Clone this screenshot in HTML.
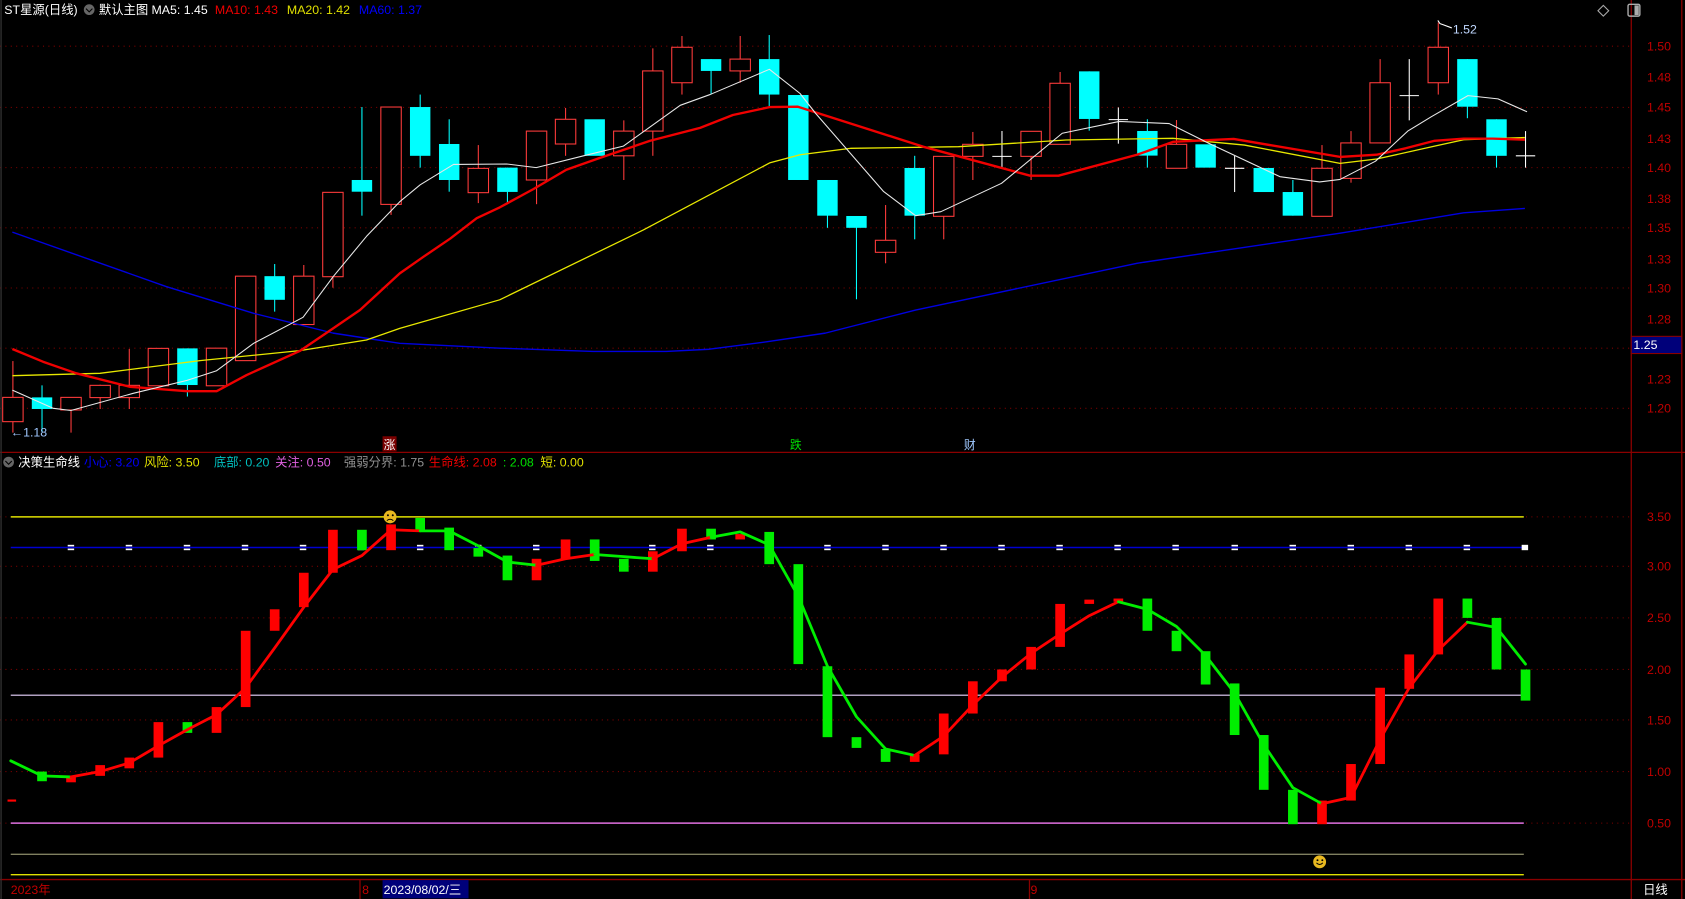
<!DOCTYPE html>
<html><head><meta charset="utf-8"><style>
html,body{margin:0;padding:0;background:#000;overflow:hidden}
svg{display:block}
text{font-family:"Liberation Sans","Noto Sans CJK SC",sans-serif}
</style></head><body>
<svg width="1685" height="899" viewBox="0 0 1568 836.6" preserveAspectRatio="none" xmlns="http://www.w3.org/2000/svg">
<rect width="1568" height="837" fill="#000"/>
<g stroke="#7a0000" stroke-width="1" stroke-dasharray="1,4">
<line x1="0" y1="43" x2="1518" y2="43"/><line x1="0" y1="100" x2="1518" y2="100"/><line x1="0" y1="156" x2="1518" y2="156"/><line x1="0" y1="212" x2="1518" y2="212"/><line x1="0" y1="268" x2="1518" y2="268"/><line x1="0" y1="324" x2="1518" y2="324"/><line x1="0" y1="380" x2="1518" y2="380"/>
<line x1="0" y1="481" x2="1518" y2="481"/><line x1="0" y1="527" x2="1518" y2="527"/><line x1="0" y1="575" x2="1518" y2="575"/><line x1="0" y1="623" x2="1518" y2="623"/><line x1="0" y1="670" x2="1518" y2="670"/><line x1="0" y1="718" x2="1518" y2="718"/><line x1="0" y1="766" x2="1518" y2="766"/>
</g>
<g stroke="#8b0000" stroke-width="1.2" fill="none">
<line x1="0" y1="421" x2="1568" y2="421"/>
<line x1="1518" y1="0" x2="1518" y2="837"/>
<line x1="0" y1="818.5" x2="1568" y2="818.5"/>
<line x1="1565" y1="0" x2="1565" y2="837"/>
<line x1="335" y1="819" x2="335" y2="837"/><line x1="958" y1="819" x2="958" y2="837"/>
<line x1="1" y1="0" x2="1" y2="837" stroke="#333"/>
</g>
<g fill="#c00000" font-size="11.5" text-anchor="end">
<text x="1555" y="47">1.50</text><text x="1555" y="76">1.48</text><text x="1555" y="104">1.45</text><text x="1555" y="133">1.43</text><text x="1555" y="160">1.40</text><text x="1555" y="189">1.38</text><text x="1555" y="216">1.35</text><text x="1555" y="245">1.33</text><text x="1555" y="272">1.30</text><text x="1555" y="301">1.28</text><text x="1555" y="357">1.23</text><text x="1555" y="384">1.20</text>
<text x="1555" y="485">3.50</text><text x="1555" y="531">3.00</text><text x="1555" y="579">2.50</text><text x="1555" y="627">2.00</text><text x="1555" y="674">1.50</text><text x="1555" y="722">1.00</text><text x="1555" y="770">0.50</text>
</g>
<rect x="1518" y="313" width="47" height="16" fill="#00007a" stroke="#8b0000"/>
<text x="1520" y="325" fill="#fff" font-size="11.5">1.25</text>

<!-- candles: wicks -->
<g stroke-width="1">
<g stroke="#ff3b3b">
<line x1="12" y1="336" x2="12" y2="402.6"/><line x1="66.1" y1="370" x2="66.1" y2="402.6"/><line x1="93.2" y1="358" x2="93.2" y2="380.6"/><line x1="120.3" y1="324.8" x2="120.3" y2="380.6"/><line x1="282.7" y1="246.6" x2="282.7" y2="302"/><line x1="309.8" y1="179" x2="309.8" y2="267.7"/><line x1="363.9" y1="99.6" x2="363.9" y2="200"/><line x1="445.1" y1="135" x2="445.1" y2="189"/><line x1="499.3" y1="122" x2="499.3" y2="190"/><line x1="526.3" y1="100.5" x2="526.3" y2="145"/><line x1="580.5" y1="112" x2="580.5" y2="167.5"/><line x1="607.5" y1="45" x2="607.5" y2="145"/><line x1="634.6" y1="33.5" x2="634.6" y2="88"/><line x1="688.8" y1="33.5" x2="688.8" y2="77"/><line x1="824.1" y1="190.8" x2="824.1" y2="245"/><line x1="878.2" y1="145.5" x2="878.2" y2="222.7"/><line x1="905.3" y1="122.8" x2="905.3" y2="167.5"/><line x1="959.5" y1="122" x2="959.5" y2="167.5"/><line x1="986.5" y1="67" x2="986.5" y2="134.3"/><line x1="1094.8" y1="111.7" x2="1094.8" y2="156.6"/><line x1="1230.2" y1="135" x2="1230.2" y2="201.3"/><line x1="1257.2" y1="122" x2="1257.2" y2="170"/><line x1="1284.3" y1="55" x2="1284.3" y2="133"/><line x1="1338.4" y1="21" x2="1338.4" y2="88"/>
</g>
<g stroke="#00ffff">
<line x1="39.1" y1="358.6" x2="39.1" y2="402"/><line x1="174.4" y1="324.2" x2="174.4" y2="369"/><line x1="255.6" y1="245.7" x2="255.6" y2="290"/><line x1="336.8" y1="99.6" x2="336.8" y2="200.7"/><line x1="391" y1="88" x2="391" y2="156"/><line x1="418" y1="111" x2="418" y2="178.4"/><line x1="472.2" y1="156" x2="472.2" y2="189"/><line x1="661.7" y1="55" x2="661.7" y2="88"/><line x1="715.8" y1="32.6" x2="715.8" y2="99.6"/><line x1="770" y1="167.5" x2="770" y2="212"/><line x1="797" y1="201" x2="797" y2="278.5"/><line x1="851.2" y1="145" x2="851.2" y2="222.7"/><line x1="1013.6" y1="66.4" x2="1013.6" y2="121.6"/><line x1="1067.7" y1="111" x2="1067.7" y2="156"/><line x1="1203.1" y1="167.5" x2="1203.1" y2="200.7"/><line x1="1365.5" y1="55" x2="1365.5" y2="110"/><line x1="1392.6" y1="111" x2="1392.6" y2="156"/>
</g>
<g stroke="#fff">
<line x1="932.4" y1="121.9" x2="932.4" y2="156.3"/><line x1="923.4" y1="145.5" x2="941.4" y2="145.5"/>
<line x1="1040.7" y1="100" x2="1040.7" y2="133.7"/><line x1="1031.7" y1="111.3" x2="1049.7" y2="111.3"/>
<line x1="1148.9" y1="145" x2="1148.9" y2="178.7"/><line x1="1139.9" y1="156.6" x2="1157.9" y2="156.6"/>
<line x1="1311.4" y1="55" x2="1311.4" y2="112"/><line x1="1302.4" y1="89" x2="1320.4" y2="89"/>
<line x1="1419.6" y1="122" x2="1419.6" y2="156"/><line x1="1410.6" y1="145" x2="1428.6" y2="145"/>
</g>
<g stroke="#ff3b3b" fill="#000">
<rect x="2.5" y="369.8" width="19" height="22.6"/><rect x="56.6" y="369.8" width="19" height="11.7"/><rect x="83.7" y="358.6" width="19" height="11.4"/><rect x="110.8" y="358.6" width="19" height="11.4"/><rect x="137.9" y="324.2" width="19" height="34.8"/><rect x="192" y="324" width="19" height="35"/><rect x="219.1" y="257" width="19" height="78.6"/><rect x="273.2" y="257" width="19" height="45"/><rect x="300.3" y="179" width="19" height="78.5"/><rect x="354.4" y="99.6" width="19" height="90.6"/><rect x="435.6" y="156.7" width="19" height="22.6"/><rect x="489.8" y="122" width="19" height="45.5"/><rect x="516.8" y="111" width="19" height="23"/><rect x="571" y="122" width="19" height="23"/><rect x="598" y="66" width="19" height="56"/><rect x="625.1" y="44" width="19" height="33"/><rect x="679.3" y="55" width="19" height="11"/><rect x="814.6" y="223.6" width="19" height="11.2"/><rect x="868.7" y="145.5" width="19" height="55.8"/><rect x="895.8" y="134.3" width="19" height="11.2"/><rect x="950" y="122.2" width="19" height="23.3"/><rect x="977" y="77.5" width="19" height="56.8"/><rect x="1085.3" y="134.3" width="19" height="22.3"/><rect x="1220.7" y="156.6" width="19" height="44.7"/><rect x="1247.7" y="133" width="19" height="33"/><rect x="1274.8" y="77" width="19" height="56"/><rect x="1328.9" y="44" width="19" height="33"/>
</g>
<g fill="#00ffff">
<rect x="29.6" y="369.8" width="19" height="10.8"/><rect x="164.9" y="324.2" width="19" height="34.1"/><rect x="246.1" y="257" width="19" height="22"/><rect x="327.3" y="167.5" width="19" height="10.9"/><rect x="381.5" y="99.6" width="19" height="45.4"/><rect x="408.5" y="134" width="19" height="33.5"/><rect x="462.7" y="156" width="19" height="22.6"/><rect x="543.9" y="111" width="19" height="34"/><rect x="652.2" y="55" width="19" height="11"/><rect x="706.3" y="55" width="19" height="33"/><rect x="733.4" y="88.4" width="19" height="79.1"/><rect x="760.5" y="167.5" width="19" height="33.2"/><rect x="787.5" y="201" width="19" height="11"/><rect x="841.7" y="156.3" width="19" height="44.4"/><rect x="1004.1" y="66.4" width="19" height="44.3"/><rect x="1058.2" y="121.9" width="19" height="22.9"/><rect x="1112.4" y="134.3" width="19" height="21.7"/><rect x="1166.5" y="156.3" width="19" height="22.4"/><rect x="1193.6" y="178.7" width="19" height="22"/><rect x="1356" y="55" width="19" height="44.3"/><rect x="1383.1" y="111" width="19" height="34"/>
</g>
</g>

<!-- MAs -->
<g fill="none" stroke-linejoin="round">
<polyline stroke="#0000e0" stroke-width="1.3" points="11.5,216 155,266.8 236,291.6 310,310 372,319.5 465,324 552,327 620,327 660,325 714,318 768,310 852,288.5 1058,245 1247,217 1308,207 1362,198 1419,194"/>
<polyline stroke="#e8e800" stroke-width="1.2" points="11.5,349.6 93,347.4 186,335.6 279,326.3 341,316.4 372,305.6 465,279 598.7,214 716.6,151.4 744.5,144 792,138 892,136.5 992,130.3 1091.5,128.7 1158,135 1247,152 1281,148 1335,136 1362,130 1419,128"/>
<polyline stroke="#f00000" stroke-width="2.2" points="11.5,324.8 40,336.6 71,347.4 121,360 174,364 201.6,364 229.5,349 279,326.6 310,305.6 335,288.5 372,254.4 394,239 419,222 443.6,203 465,193 496.3,176 527,158 558,147 605,131 651.5,119 682,107 716.6,99.6 742.5,99.3 859,136.5 958.6,163.5 985,163.5 1058,144 1091.5,132 1148,129.3 1247,146 1281,144 1308,138 1335,131 1362,129 1389,129 1419,130"/>
<polyline stroke="#e8e8e8" stroke-width="1" points="11.5,363 49.6,380 66,382 124,366 174,354 201.6,345 236,319.5 282,295.3 310,257.5 341,220 372,187.7 391,172 422,153 471.5,152.6 499,156 543,145 580,136 633,98 660.7,88 716,64.5 744.5,87 759,105.5 822,178 852,200.7 875.5,197 932,170.6 988.5,124 1041.6,113 1088,115 1125,133.4 1191,164.4 1228,169.3 1247,167 1280,150 1310,122 1332,108.6 1366,89 1394,92 1421,104"/>
</g>

<!-- lower lines -->
<g stroke-width="1.3">
<line x1="10" y1="481" x2="1418" y2="481" stroke="#e0e000"/>
<line x1="10" y1="509.5" x2="1422" y2="509.5" stroke="#0000d0"/>
<line x1="10" y1="647" x2="1418" y2="647" stroke="#b0a0c0"/>
<line x1="10" y1="766" x2="1418" y2="766" stroke="#e070e0"/>
<line x1="10" y1="795" x2="1418" y2="795" stroke="#808060"/>
<line x1="10" y1="814" x2="1418" y2="814" stroke="#e0e000"/>
</g>
<g fill="#fff">
<rect x="63" y="507" width="6" height="1.5"/><rect x="63" y="510.5" width="6" height="1.5"/>
<rect x="117" y="507" width="6" height="1.5"/><rect x="117" y="510.5" width="6" height="1.5"/>
<rect x="171" y="507" width="6" height="1.5"/><rect x="171" y="510.5" width="6" height="1.5"/>
<rect x="225" y="507" width="6" height="1.5"/><rect x="225" y="510.5" width="6" height="1.5"/>
<rect x="279" y="507" width="6" height="1.5"/><rect x="279" y="510.5" width="6" height="1.5"/>
<rect x="333" y="507" width="6" height="1.5"/><rect x="333" y="510.5" width="6" height="1.5"/>
<rect x="388" y="507" width="6" height="1.5"/><rect x="388" y="510.5" width="6" height="1.5"/>
<rect x="442" y="507" width="6" height="1.5"/><rect x="442" y="510.5" width="6" height="1.5"/>
<rect x="496" y="507" width="6" height="1.5"/><rect x="496" y="510.5" width="6" height="1.5"/>
<rect x="550" y="507" width="6" height="1.5"/><rect x="550" y="510.5" width="6" height="1.5"/>
<rect x="604" y="507" width="6" height="1.5"/><rect x="604" y="510.5" width="6" height="1.5"/>
<rect x="658" y="507" width="6" height="1.5"/><rect x="658" y="510.5" width="6" height="1.5"/>
<rect x="712" y="507" width="6" height="1.5"/><rect x="712" y="510.5" width="6" height="1.5"/>
<rect x="767" y="507" width="6" height="1.5"/><rect x="767" y="510.5" width="6" height="1.5"/>
<rect x="821" y="507" width="6" height="1.5"/><rect x="821" y="510.5" width="6" height="1.5"/>
<rect x="875" y="507" width="6" height="1.5"/><rect x="875" y="510.5" width="6" height="1.5"/>
<rect x="929" y="507" width="6" height="1.5"/><rect x="929" y="510.5" width="6" height="1.5"/>
<rect x="983" y="507" width="6" height="1.5"/><rect x="983" y="510.5" width="6" height="1.5"/>
<rect x="1037" y="507" width="6" height="1.5"/><rect x="1037" y="510.5" width="6" height="1.5"/>
<rect x="1091" y="507" width="6" height="1.5"/><rect x="1091" y="510.5" width="6" height="1.5"/>
<rect x="1146" y="507" width="6" height="1.5"/><rect x="1146" y="510.5" width="6" height="1.5"/>
<rect x="1200" y="507" width="6" height="1.5"/><rect x="1200" y="510.5" width="6" height="1.5"/>
<rect x="1254" y="507" width="6" height="1.5"/><rect x="1254" y="510.5" width="6" height="1.5"/>
<rect x="1308" y="507" width="6" height="1.5"/><rect x="1308" y="510.5" width="6" height="1.5"/>
<rect x="1362" y="507" width="6" height="1.5"/><rect x="1362" y="510.5" width="6" height="1.5"/>
<rect x="1416" y="507" width="6" height="5"/>
</g>

<!-- lower bars -->
<rect x="7" y="744" width="8" height="2" fill="#f00"/>
<g fill="#ff0000">
<rect x="61.6" y="722" width="9" height="6"/><rect x="88.7" y="712" width="9" height="10"/><rect x="115.8" y="705" width="9" height="10"/><rect x="142.9" y="672" width="9" height="33"/><rect x="197" y="658" width="9" height="24"/><rect x="224.1" y="587" width="9" height="71"/><rect x="251.1" y="567" width="9" height="20"/><rect x="278.2" y="533" width="9" height="32"/><rect x="305.3" y="493" width="9" height="40"/><rect x="359.4" y="488" width="9" height="24"/><rect x="494.8" y="520" width="9" height="20"/><rect x="521.8" y="502" width="9" height="18"/><rect x="603" y="513" width="9" height="19"/><rect x="630.1" y="492" width="9" height="21"/><rect x="684.3" y="497" width="9" height="5"/><rect x="846.7" y="702" width="9" height="7"/><rect x="873.7" y="664" width="9" height="38"/><rect x="900.8" y="634" width="9" height="30"/><rect x="927.9" y="623" width="9" height="11"/><rect x="955" y="602" width="9" height="21"/><rect x="982" y="562" width="9" height="40"/><rect x="1009.1" y="558" width="9" height="4"/><rect x="1036.2" y="557" width="9" height="3"/><rect x="1225.7" y="745" width="9" height="22"/><rect x="1252.7" y="711" width="9" height="34"/><rect x="1279.8" y="640" width="9" height="71"/><rect x="1306.9" y="609" width="9" height="32"/><rect x="1333.9" y="557" width="9" height="52"/>
</g>
<g fill="#00ee00">
<rect x="34.6" y="718" width="9" height="9"/><rect x="169.9" y="672" width="9" height="10"/><rect x="332.3" y="493" width="9" height="19"/><rect x="386.5" y="482" width="9" height="11"/><rect x="413.5" y="491" width="9" height="21"/><rect x="440.6" y="510" width="9" height="8"/><rect x="467.7" y="517" width="9" height="23"/><rect x="548.9" y="502" width="9" height="20"/><rect x="576" y="520" width="9" height="12"/><rect x="657.2" y="492" width="9" height="10"/><rect x="711.3" y="495" width="9" height="30"/><rect x="738.4" y="525" width="9" height="93"/><rect x="765.5" y="620" width="9" height="66"/><rect x="792.5" y="686" width="9" height="10"/><rect x="819.6" y="697" width="9" height="12"/><rect x="1063.2" y="557" width="9" height="30"/><rect x="1090.3" y="587" width="9" height="19"/><rect x="1117.4" y="606" width="9" height="31"/><rect x="1144.4" y="636" width="9" height="48"/><rect x="1171.5" y="684" width="9" height="51"/><rect x="1198.6" y="735" width="9" height="32"/><rect x="1361" y="557" width="9" height="18"/><rect x="1388.1" y="575" width="9" height="48"/><rect x="1415.1" y="623" width="9" height="29"/>
</g>
<!-- life line -->
<g fill="none" stroke-width="2.6" stroke-linejoin="round" stroke-linecap="round">
<polyline stroke="#00ee00" points="10,708 39.1,722 66.1,723"/>
<polyline stroke="#ff0000" points="66.1,723 93.2,718 120.3,710 147.4,694 174.4,679 201.5,665 228.6,640 255.6,603 282.7,565 309.8,530 336.8,517 363.9,493"/>
<polyline stroke="#ff0000" points="363.9,493 391,494"/>
<polyline stroke="#00ee00" points="391,494 418,494 445.1,508 472.2,523 499.3,526"/>
<polyline stroke="#ff0000" points="499.3,526 526.3,520 553.4,516"/>
<polyline stroke="#00ee00" points="553.4,516 580.5,518 607.5,520"/>
<polyline stroke="#ff0000" points="607.5,520 634.6,506 661.7,500"/>
<polyline stroke="#00ee00" points="661.7,500 688.8,495 715.8,507 742.9,555 770,620 797,667 824.1,697 851.2,703"/>
<polyline stroke="#ff0000" points="851.2,703 878.2,685 905.3,656 932.4,630 959.5,608 986.5,590 1013.6,573 1040.7,560"/>
<polyline stroke="#00ee00" points="1040.7,560 1067.7,567 1094.8,583 1121.9,610 1148.9,645 1176,693 1203.1,733 1230.2,748"/>
<polyline stroke="#ff0000" points="1230.2,748 1257.2,742 1284.3,688 1311.4,640 1338.4,605 1365.5,579"/>
<polyline stroke="#00ee00" points="1365.5,579 1392.6,584 1419.6,618"/>
</g>
<!-- faces -->
<g><circle cx="363" cy="481" r="6" fill="#e8b820"/><circle cx="361" cy="479.5" r=".9" fill="#000"/><circle cx="365.5" cy="479.5" r=".9" fill="#000"/><path d="M360,484.5 Q363,482 366,484.5" stroke="#000" fill="none" stroke-width=".9"/></g>
<g><circle cx="1228" cy="802" r="6" fill="#e8b820"/><circle cx="1226" cy="800.5" r=".9" fill="#000"/><circle cx="1230.5" cy="800.5" r=".9" fill="#000"/><path d="M1225,803 Q1228,806 1231,803" stroke="#000" fill="none" stroke-width=".9"/></g>
<!-- labels -->
<rect x="356" y="406" width="13" height="14" fill="#7a0000"/><text x="357" y="418" fill="#fff" font-size="11">涨</text>
<text x="735" y="418" fill="#00e000" font-size="11">跌</text>
<text x="897" y="418" fill="#a0c8ff" font-size="11">财</text>
<text x="10" y="406" fill="#a0c8ff" font-size="11.5">←1.18</text>
<path d="M1340,22 l-2,-3 M1340,22 l3,1 l8,3" stroke="#fff" fill="none"/>
<text x="1352" y="31" fill="#c0d8ff" font-size="11.5">1.52</text>
<!-- header -->
<g font-size="11.5">
<text x="4" y="13" fill="#fff">ST星源(日线)</text>
<circle cx="83" cy="9" r="5" fill="#666"/><path d="M80,8 l3,3 l3,-3" stroke="#000" fill="none"/>
<text x="92" y="13" fill="#fff">默认主图</text>
<text x="141" y="13" fill="#fff">MA5: 1.45</text>
<text x="200" y="13" fill="#f00000">MA10: 1.43</text>
<text x="267" y="13" fill="#e0e000">MA20: 1.42</text>
<text x="334" y="13" fill="#0000ff">MA60: 1.37</text>
<circle cx="8" cy="430" r="5" fill="#666"/><path d="M5,429 l3,3 l3,-3" stroke="#000" fill="none"/>
<text x="17" y="434" fill="#fff">决策生命线</text>
<text x="78" y="434" fill="#0000ff">小心: 3.20</text>
<text x="134" y="434" fill="#e0e000">风险: 3.50</text>
<text x="199" y="434" fill="#00c0c0">底部: 0.20</text>
<text x="256" y="434" fill="#e060e0">关注: 0.50</text>
<text x="320" y="434" fill="#909090">强弱分界: 1.75</text>
<text x="399" y="434" fill="#f00000">生命线: 2.08</text>
<text x="468" y="434" fill="#00e000">: 2.08</text>
<text x="503" y="434" fill="#e0e000">短: 0.00</text>
<text x="10" y="832" fill="#c00000">2023年</text>
<text x="337" y="832" fill="#c00000">8</text>
<rect x="356" y="819" width="80" height="17" fill="#00007a"/>
<text x="357" y="832" fill="#fff">2023/08/02/三</text>
<text x="959" y="832" fill="#c00000">9</text>
<text x="1529" y="832" fill="#fff">日线</text>
</g>
<path d="M1492,5 l5,5 l-5,5 l-5,-5z" stroke="#aaa" fill="none"/>
<rect x="1515" y="4" width="11" height="11" rx="1.5" stroke="#aaa" fill="none" stroke-width="1.3"/><rect x="1521" y="5" width="4" height="9" fill="#aaa"/>
</svg>
</body></html>
